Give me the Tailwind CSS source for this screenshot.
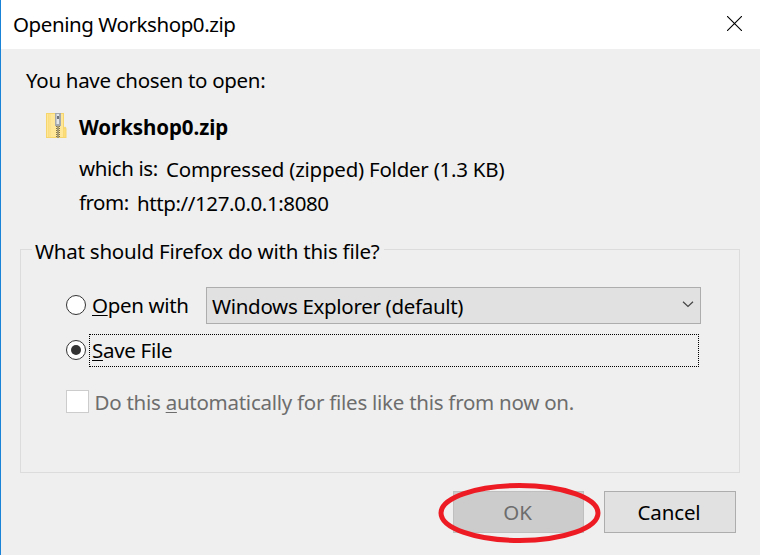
<!DOCTYPE html>
<html lang="en">
<head>
<meta charset="utf-8">
<title>Opening Workshop0.zip</title>
<script src="https://cdn.jsdelivr.net/npm/@tailwindcss/browser@4"></script>
</head>
<body class="relative flex h-[555px] w-[760px] flex-col overflow-hidden border-l border-[#1883d7] bg-[#efefef] font-['Noto_Sans','Open_Sans',sans-serif] text-[20.5px] leading-[30px] whitespace-nowrap text-black">
  <header class="flex h-[49px] shrink-0 justify-between bg-white pt-[9px] pr-[18px] pl-[12px]">
    <h1 class="tracking-[-0.43px]">Opening Workshop0.zip</h1>
    <svg class="mt-[7px] h-[15px] w-[15px]" viewBox="0 0 15 15" fill="none" stroke="#000" stroke-width="1.1"><path d="M0 0L15 15M15 0L0 15"/></svg>
  </header>

  <section class="h-[200px] shrink-0 pt-4 pl-[25px]">
    <p class="tracking-[-0.3px]">You have chosen to open:</p>
    <div class="mt-[17px] flex">
      <svg class="mt-[1px] ml-5 h-[25px] w-[21px]" viewBox="0 0 21 25">
        <path d="M0 0H18V14.5L19 13.5Q20.5 14 20.5 16V25H0Z" fill="#f5d56c"/>
        <path d="M1 1H17V24H1Z" fill="#ffe797"/>
        <path d="M2.5 1V24M4 1V24" stroke="#f7d872" stroke-width=".7"/>
        <path d="M17.5 15.5H19.5V24H17.5Z" fill="#fbdc78"/>
        <path d="M9 0H15V13H9Z" fill="#a4a9ad"/>
        <path d="M10.5 1H13V11H10.5Z" fill="#e4e7e9"/>
        <path d="M11 3H13V6H11Z" fill="#6e7479"/>
        <path d="M12 13V25" stroke="#81744b" stroke-width="4" stroke-dasharray="1 1"/>
        <path d="M12 13V25" stroke="#a3986f" stroke-width="2"/>
      </svg>
      <div class="ml-3">
        <p class="font-bold tracking-[-0.08px]">Workshop0.zip</p>
        <p class="mt-[11px] flex gap-[7px]"><span class="w-20 tracking-[-0.42px]">which is:</span><span class="mt-px tracking-[-0.24px]">Compressed (zipped) Folder (1.3 KB)</span></p>
        <p class="mt-[3px] flex gap-[7px]"><span class="w-[51px] tracking-[-0.5px]">from:</span><span class="mt-px tracking-[-0.4px]">http://127.0.0.1:8080</span></p>
      </div>
    </div>
  </section>

  <fieldset class="relative ml-[19px] h-[224px] w-[720px] shrink-0 border border-[#dcdcdc] pt-[37px] pl-[45px]">
    <div class="absolute top-[-14px] left-[11px] w-[352px] bg-[#efefef] px-[3px] tracking-[-0.23px]">What should Firefox do with this file?</div>
    <label class="flex h-[37px]">
      <span class="mt-2 h-5 w-5 rounded-full border border-[#333] bg-white"></span>
      <span class="mt-[3px] ml-[6px] w-[114px] tracking-[-0.35px]"><span class="underline decoration-1 underline-offset-[2px]">O</span>pen with</span>
      <span class="flex h-[37px] w-[495px] justify-between border border-[#adadad] bg-[#e1e1e1] pt-[3px] pr-[6px] pl-[5px]">
        <span class="tracking-[-0.31px]">Windows Explorer (default)</span>
        <svg class="mt-[10px] h-[7px] w-[12px]" viewBox="0 0 12 7" fill="none" stroke="#444" stroke-width="1.2"><path d="M1 .8L6 5.5L11 .8"/></svg>
      </span>
    </label>
    <label class="mt-[10px] flex h-[33px]">
      <span class="mt-[6px] flex h-5 w-5 items-center justify-center rounded-full border border-[#333] bg-white"><span class="h-[10px] w-[10px] rounded-full bg-[#333]"></span></span>
      <span class="ml-[3px] h-[33px] w-[610px] border border-dotted border-black pl-[2px] tracking-[-0.3px]"><span class="underline decoration-1 underline-offset-[2px]">S</span>ave File</span>
    </label>
    <label class="mt-[20px] flex text-[#6d6d6d]">
      <span class="mt-[3px] h-[23px] w-[23px] border border-[#ccc] bg-white"></span>
      <span class="ml-[5.5px] tracking-[-0.26px]">Do this <span class="underline decoration-1 underline-offset-[2px]">a</span>utomatically for files like this from now on.</span>
    </label>
  </fieldset>

  <footer class="mt-[18px] flex justify-end gap-5 pr-6">
    <button class="h-[42px] w-[131px] border border-[#bfbfbf] bg-[#ccc] pr-[2px] text-[#6d6d6d]">OK</button>
    <button class="h-[42px] w-[132px] border border-[#adadad] bg-[#e1e1e1] pr-[2px] tracking-[-0.15px]">Cancel</button>
  </footer>
  <svg class="absolute top-[483px] left-[437px] h-[60px] w-[163px]" viewBox="0 0 163 60" fill="none" stroke="#ed1c24" stroke-width="5"><ellipse cx="81.5" cy="30" rx="78.5" ry="27.5"/></svg>
</body>
</html>
